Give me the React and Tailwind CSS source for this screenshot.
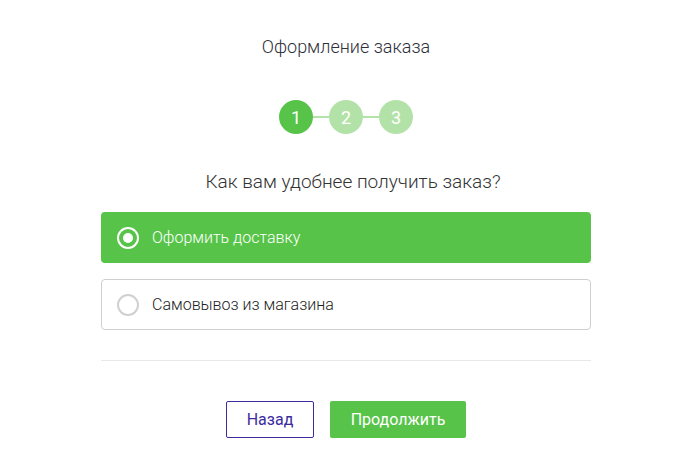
export default function App() {
  return (
    <div className="w-[687px] h-[474px] bg-white" style={{ fontFamily: "Roboto, 'Liberation Sans', sans-serif" }}>
      <div className="ml-[101px] w-[490px] flex flex-col">
        <div className="pt-[35px] text-center text-[18px] leading-[24px] font-light text-[#2f2f3a]">Оформление заказа</div>
        <div className="mt-[41px] flex items-center justify-center">
          <div className="w-[34px] h-[34px] rounded-full bg-[#57c449] text-white text-[18px] flex items-center justify-center">1</div>
          <div className="w-[16px] h-[2px] bg-[#b3e2a8]"></div>
          <div className="w-[34px] h-[34px] rounded-full bg-[#b3e2a8] text-white text-[18px] flex items-center justify-center">2</div>
          <div className="w-[16px] h-[2px] bg-[#b3e2a8]"></div>
          <div className="w-[34px] h-[34px] rounded-full bg-[#b3e2a8] text-white text-[18px] flex items-center justify-center">3</div>
        </div>
        <div className="mt-[35px] pl-[14px] text-center text-[19px] leading-[26px] font-light text-[#333]">Как вам удобнее получить заказ?</div>
        <div className="mt-[17px] h-[51px] rounded-[4px] bg-[#57c449] flex items-center px-[16px]">
          <div className="w-[22px] h-[22px] rounded-full border-2 border-white flex items-center justify-center">
            <div className="w-[10px] h-[10px] rounded-full bg-white"></div>
          </div>
          <span className="ml-[13px] text-[16px] font-light text-white">Оформить доставку</span>
        </div>
        <div className="mt-[16px] h-[51px] rounded-[4px] border border-[#cfcfcf] flex items-center px-[15px]">
          <div className="w-[22px] h-[22px] rounded-full border-2 border-[#d0d0d0]"></div>
          <span className="ml-[13px] text-[16px] font-light text-[#222]">Самовывоз из магазина</span>
        </div>
        <div className="mt-[30px] h-px bg-[#e8e8e8]"></div>
        <div className="mt-[40px] flex justify-center gap-[16px]">
          <button className="w-[88px] h-[37px] rounded-[2px] border border-[#3d2c9e] text-[#3d2c9e] text-[16px] bg-white">Назад</button>
          <button className="w-[136px] h-[37px] rounded-[2px] bg-[#57c449] text-white text-[16px]">Продолжить</button>
        </div>
      </div>
    </div>
  );
}
